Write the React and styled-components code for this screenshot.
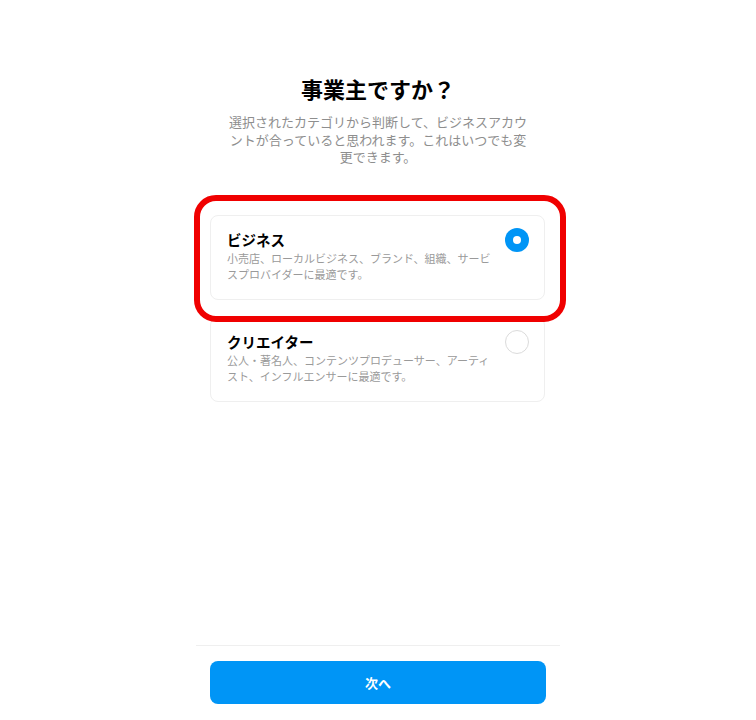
import React, { useState } from 'react';
import styled, { createGlobalStyle } from 'styled-components';

const GlobalStyle = createGlobalStyle`
  body {
    margin: 0;
    background: #fff;
    font-family: "Noto Sans CJK JP", "Noto Sans", sans-serif;
    color: #262626;
  }
`;

const Page = styled.div`
  width: 364px;
  height: 100vh;
  margin: 0 auto;
  display: flex;
  flex-direction: column;
`;

const Header = styled.div`
  padding-top: 74px;
  text-align: center;
`;

const Title = styled.h1`
  margin: 0;
  font-size: 22px;
  line-height: 28px;
  font-weight: 700;
  color: #000;
`;

const Subtitle = styled.p`
  width: 300px;
  margin: 11px auto 0;
  font-size: 13px;
  line-height: 17.5px;
  color: #8e8e8e;
`;

const Options = styled.div`
  margin-top: 49px;
  padding: 0 15px 0 14px;
  display: flex;
  flex-direction: column;
  gap: 17px;
`;

const Highlight = styled.div`
  position: relative;
`;

const Annotation = styled.div`
  position: absolute;
  top: -20px;
  left: -16px;
  right: -21px;
  bottom: -22px;
  border: 6px solid #f00000;
  border-radius: 22px;
  pointer-events: none;
`;

const Card = styled.label`
  display: flex;
  align-items: flex-start;
  justify-content: space-between;
  padding: 12px 15px 17px 16px;
  border: 1px solid #efefef;
  border-radius: 8px;
  cursor: pointer;
  box-sizing: border-box;
  height: 85px;
`;

const CardText = styled.div`
  padding-top: 3px;
`;

const CardTitle = styled.div`
  font-size: 14.5px;
  line-height: 18px;
  font-weight: 700;
  color: #000;
`;

const CardDesc = styled.div`
  width: 268px;
  margin-top: 1px;
  font-size: 11px;
  line-height: 16px;
  color: #9a9a9a;
`;

const Radio = styled.span`
  flex: none;
  width: 24px;
  height: 24px;
  border-radius: 50%;
  box-sizing: border-box;
  display: flex;
  align-items: center;
  justify-content: center;
  background: ${({ checked }) => (checked ? '#0095f6' : '#fff')};
  border: ${({ checked }) => (checked ? 'none' : '1.5px solid #dbdbdb')};

  &::after {
    content: '';
    display: ${({ checked }) => (checked ? 'block' : 'none')};
    width: 8px;
    height: 8px;
    border-radius: 50%;
    background: #fff;
  }
`;

const Footer = styled.div`
  margin-top: auto;
  border-top: 1px solid #efefef;
  padding: 15px 14px 16px;
`;

const NextButton = styled.button`
  width: 336px;
  height: 43px;
  border: none;
  border-radius: 8px;
  background: #0095f6;
  color: #fff;
  font-family: inherit;
  font-size: 13px;
  font-weight: 700;
  cursor: pointer;
`;

const options = [
  {
    id: 'business',
    title: 'ビジネス',
    desc: '小売店、ローカルビジネス、ブランド、組織、サービスプロバイダーに最適です。',
  },
  {
    id: 'creator',
    title: 'クリエイター',
    desc: '公人・著名人、コンテンツプロデューサー、アーティスト、インフルエンサーに最適です。',
  },
];

const OptionCard = ({ option, checked, onSelect }) => (
  <Card onClick={onSelect}>
    <CardText>
      <CardTitle>{option.title}</CardTitle>
      <CardDesc>{option.desc}</CardDesc>
    </CardText>
    <Radio checked={checked} />
  </Card>
);

const App = () => {
  const [selected, setSelected] = useState('business');

  return (
    <>
      <GlobalStyle />
      <Page>
        <Header>
          <Title>事業主ですか？</Title>
          <Subtitle>
            選択されたカテゴリから判断して、ビジネスアカウントが合っていると思われます。これはいつでも変更できます。
          </Subtitle>
        </Header>
        <Options>
          {options.map((o) =>
            o.id === 'business' ? (
              <Highlight key={o.id}>
                <OptionCard option={o} checked={selected === o.id} onSelect={() => setSelected(o.id)} />
                <Annotation />
              </Highlight>
            ) : (
              <OptionCard key={o.id} option={o} checked={selected === o.id} onSelect={() => setSelected(o.id)} />
            )
          )}
        </Options>
        <Footer>
          <NextButton>次へ</NextButton>
        </Footer>
      </Page>
    </>
  );
};

export default App;
